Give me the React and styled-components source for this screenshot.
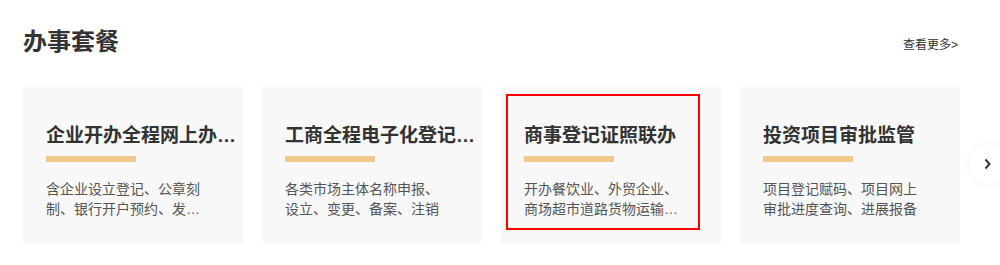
import React from "react";
import styled, {createGlobalStyle} from "styled-components";

const GlobalStyle = createGlobalStyle`
  html, body {
    margin: 0;
    padding: 0;
    background: #fff;
    overflow: hidden;
  }
  body {
    font-family: "Liberation Sans", "Noto Sans CJK SC", sans-serif;
  }
`;

const services = [
  {
    title: "企业开办全程网上办理专区",
    desc: "含企业设立登记、公章刻制、银行开户预约、发票申领、社保登记等事项",
  },
  {
    title: "工商全程电子化登记管理",
    desc: "各类市场主体名称申报、设立、变更、备案、注销",
  },
  {
    title: "商事登记证照联办",
    desc: "开办餐饮业、外贸企业、商场超市道路货物运输等行业经营许可",
    selected: true,
  },
  {
    title: "投资项目审批监管",
    desc: "项目登记赋码、项目网上审批进度查询、进展报备",
  },
];

const Page = styled.div`
  padding: 26px 40px 0 23px;
`;

const Header = styled.div`
  display: flex;
  align-items: center;
  justify-content: space-between;
  height: 32px;
`;

const Heading = styled.h2`
  margin: 0;
  font-size: 24px;
  line-height: 32px;
  font-weight: 700;
  color: #333;
`;

const More = styled.a`
  font-size: 12px;
  color: #333;
  text-decoration: none;
  margin-top: 2px;
  margin-right: 2px;
  cursor: pointer;
`;

const Carousel = styled.div`
  position: relative;
  margin-top: 29px;
`;

const CardRow = styled.div`
  display: grid;
  grid-template-columns: repeat(4, minmax(0, 1fr));
  gap: 19px;
`;

const Card = styled.div`
  min-width: 0;
  background: #f8f8f8;
  padding: 7px 21px 13px 5px;
`;

const Inner = styled.a`
  display: block;
  padding: 28px 0 9px 16px;
  border: 2px solid ${({selected}) => (selected ? "#f00" : "transparent")};
  cursor: pointer;
`;

const CardTitle = styled.div`
  width: 200px;
  font-size: 19px;
  line-height: 24px;
  font-weight: 700;
  color: #333;
  white-space: nowrap;
  overflow: hidden;
  text-overflow: ellipsis;
`;

const Bar = styled.div`
  width: 90px;
  height: 6px;
  margin-top: 8px;
  background: #f0ca8d;
`;

const Desc = styled.p`
  width: 160px;
  margin: 17px 0 0;
  font-size: 14px;
  line-height: 20px;
  color: #555;
  display: -webkit-box;
  -webkit-line-clamp: 2;
  -webkit-box-orient: vertical;
  overflow: hidden;
`;

const NextButton = styled.button`
  position: absolute;
  top: 50%;
  right: -49px;
  width: 40px;
  height: 40px;
  margin-top: -21px;
  padding: 0;
  border: none;
  border-radius: 50%;
  background: #fff;
  box-shadow: 0 0 6px rgba(0, 0, 0, 0.08);
  display: flex;
  align-items: center;
  justify-content: flex-start;
  cursor: pointer;
  svg {
    margin-left: 15px;
  }
`;

const Chevron = () => (
  <svg width="7" height="12" viewBox="0 0 7 12">
    <polyline points="1.5,1.5 5.5,6 1.5,10.5" fill="none" stroke="#333" strokeWidth="2" />
  </svg>
);

export default function App() {
  return (
    <>
      <GlobalStyle />
      <Page>
        <Header>
          <Heading>办事套餐</Heading>
          <More>查看更多&gt;</More>
        </Header>
        <Carousel>
          <CardRow>
            {services.map((s) => (
              <Card key={s.title}>
                <Inner selected={s.selected}>
                  <CardTitle>{s.title}</CardTitle>
                  <Bar />
                  <Desc>{s.desc}</Desc>
                </Inner>
              </Card>
            ))}
          </CardRow>
          <NextButton aria-label="下一页">
            <Chevron />
          </NextButton>
        </Carousel>
      </Page>
    </>
  );
}
